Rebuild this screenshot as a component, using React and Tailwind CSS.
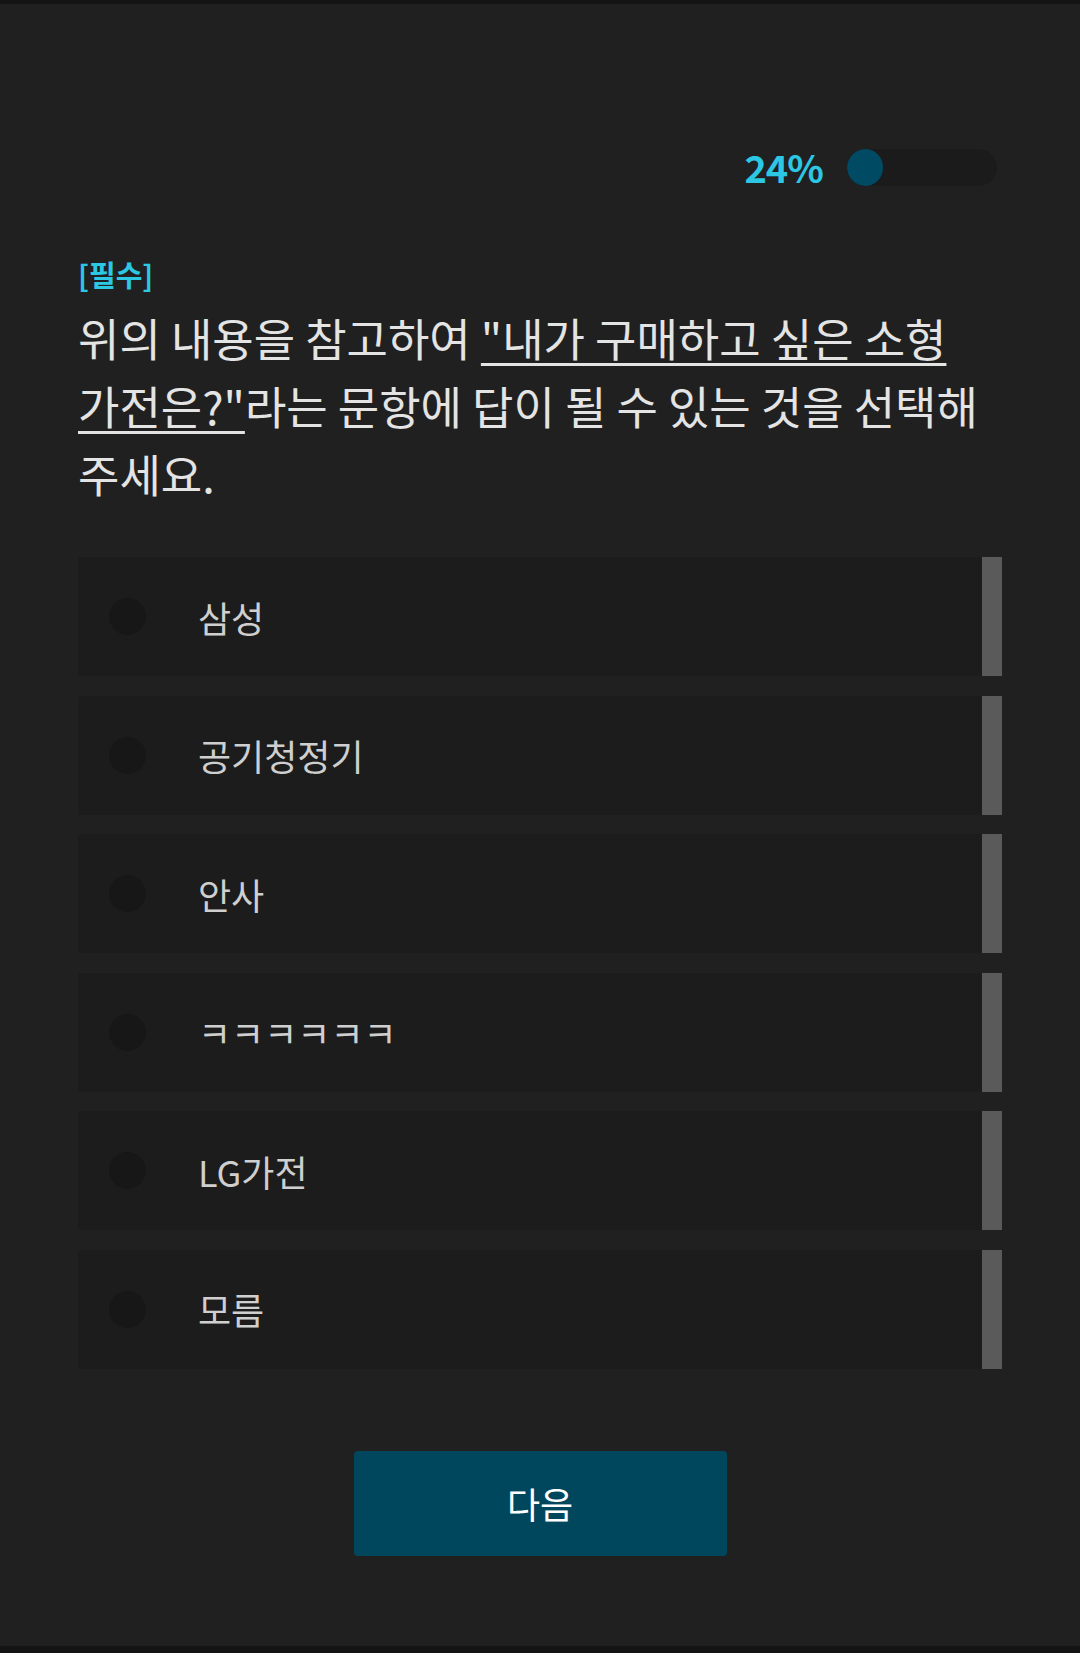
// 설문 문항 화면 — 진행률 + 단일 선택 + 다음 버튼
import { useState } from "react";

const options = ["삼성", "공기청정기", "안사", "ㅋㅋㅋㅋㅋㅋ", "LG가전", "모름"];

export default function App() {
  const [selected, setSelected] = useState(null);
  const progress = 24;

  return (
    <div
      className="w-full min-h-[1653px] bg-[#202020] flex flex-col"
      style={{ fontFamily: '"Noto Sans CJK KR", "Noto Sans", sans-serif' }}
    >
      <div className="h-[4px] bg-[#141414]" />

      <div className="px-[78px] flex-1">
        {/* 진행률 */}
        <div className="pt-[144px] flex items-center justify-end pr-[5px] gap-[24px]">
          <span className="text-[38px] font-bold leading-none text-[#2cc7e3] tracking-tight">{progress}%</span>
          <div className="w-[150px] h-[37px] rounded-full bg-[#1b1b1b] overflow-hidden">
            <div className="h-full rounded-full bg-[#004a63]" style={{ width: `${progress}%` }} />
          </div>
        </div>

        {/* 문항 */}
        <div className="mt-[70px] text-[29px] font-bold leading-[36px] text-[#2cc7e3]">[필수]</div>
        <p className="mt-[12px] text-[45px] leading-[68px] text-[#e4e4e4] break-keep">
          위의 내용을 참고하여{" "}
          <span className="underline decoration-[3px] underline-offset-[6px]">"내가 구매하고 싶은 소형 가전은?"</span>
          라는 문항에 답이 될 수 있는 것을 선택해 주세요.
        </p>

        {/* 보기 */}
        <div className="mt-[49px] flex flex-col gap-[19.5px]">
          {options.map((o, i) => (
            <button
              key={o}
              onClick={() => setSelected(i)}
              className="h-[119px] flex items-stretch bg-[#1c1c1c] rounded-[3px] text-left"
            >
              <div className="flex-1 flex items-center pl-[31px]">
                <span
                  className={
                    "w-[37px] h-[37px] rounded-full " + (selected === i ? "bg-[#2cc7e3]" : "bg-[#171717]")
                  }
                />
                <span className="ml-[52px] text-[36px] text-[#cfcfcf]">{o}</span>
              </div>
              <div className="w-[20px] bg-[#5a5a5a]" />
            </button>
          ))}
        </div>

        {/* 다음 */}
        <div className="mt-[82px] flex justify-center">
          <button className="w-[373px] h-[105px] rounded-[4px] bg-[#00465c] text-white text-[36px]">다음</button>
        </div>
      </div>

      <div className="h-[7px] bg-[#141414]" />
    </div>
  );
}
